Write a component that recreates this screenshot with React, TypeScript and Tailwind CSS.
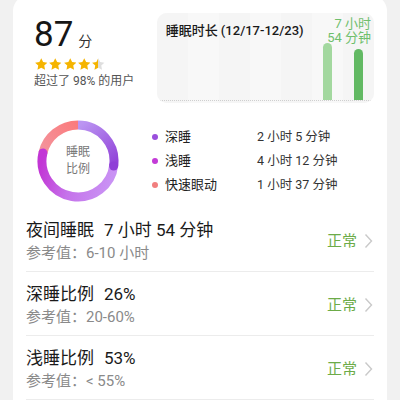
import React from "react";

const FONT = { fontFamily: 'Roboto, "Noto Sans CJK SC", sans-serif' };

interface Row {
  title: string;
  value: string;
  ref: string;
}

const rows: Row[] = [
  { title: "夜间睡眠", value: "7 小时 54 分钟", ref: "参考值：6-10 小时" },
  { title: "深睡比例", value: "26%", ref: "参考值：20-60%" },
  { title: "浅睡比例", value: "53%", ref: "参考值：< 55%" },
];

const legend = [
  { label: "深睡", value: "2 小时 5 分钟", dot: "bg-[#9a4fdc]" },
  { label: "浅睡", value: "4 小时 12 分钟", dot: "bg-[#c33bd7]" },
  { label: "快速眼动", value: "1 小时 37 分钟", dot: "bg-[#f17f7f]" },
];

// day columns of the weekly chart; only the last two have data
const bars: (number | null)[] = [null, null, null, null, null, 57, 51];

const Star = ({ fill = 1, id }: { fill?: number; id: string }) => (
  <svg width="12.5" height="12" viewBox="1.6 1.6 20.8 19.9">
    <defs>
      <linearGradient id={id} x1="0" x2="1" y1="0" y2="0">
        <stop offset={fill} stopColor="#f5b400" />
        <stop offset={fill} stopColor="#dedede" />
      </linearGradient>
    </defs>
    <path
      d="M12 1.8l3.1 6.6 7.1.9-5.2 4.9 1.3 7.1L12 17.8l-6.3 3.5 1.3-7.1L1.8 9.3l7.1-.9z"
      fill={`url(#${id})`}
    />
  </svg>
);

// angle in degrees, 0 = top, clockwise
const pt = (a: number, r = 36, c = 42) => {
  const rad = (a * Math.PI) / 180;
  return [c + r * Math.sin(rad), c - r * Math.cos(rad)];
};

const arc = (from: number, to: number) => {
  const [x1, y1] = pt(from);
  const [x2, y2] = pt(to);
  const large = to - from > 180 ? 1 : 0;
  return `M ${x1} ${y1} A 36 36 0 ${large} 1 ${x2} ${y2}`;
};

const Donut = () => {
  const [ex, ey] = pt(98);
  return (
    <svg width="84" height="84" viewBox="0 0 84 84">
      <defs>
        <linearGradient id="rem" gradientUnits="userSpaceOnUse" x1="8" y1="30" x2="42" y2="6">
          <stop offset="0" stopColor="#f4929a" />
          <stop offset="1" stopColor="#fb7b7c" />
        </linearGradient>
        <linearGradient id="deep" gradientUnits="userSpaceOnUse" x1="44" y1="6" x2="78" y2="48">
          <stop offset="0" stopColor="#bb95f2" />
          <stop offset="1" stopColor="#8f3fd7" />
        </linearGradient>
        <linearGradient id="light" gradientUnits="userSpaceOnUse" x1="78" y1="55" x2="8" y2="35">
          <stop offset="0" stopColor="#c992f4" />
          <stop offset="0.55" stopColor="#c572ea" />
          <stop offset="1" stopColor="#c236d5" />
        </linearGradient>
      </defs>
      <path d={arc(283, 360)} stroke="url(#rem)" strokeWidth="9" fill="none" />
      <path d={arc(96, 283)} stroke="url(#light)" strokeWidth="9" fill="none" strokeLinecap="round" />
      <path d={arc(0, 98)} stroke="url(#deep)" strokeWidth="9" fill="none" />
      <circle cx={ex} cy={ey} r="4.5" fill="#8f3fd7" />
    </svg>
  );
};

const Chevron = () => (
  <svg width="9" height="16" viewBox="0 0 9 16">
    <polyline points="1.5,1.5 7.5,8 1.5,14.5" fill="none" stroke="#c9c9c9" strokeWidth="1.4" />
  </svg>
);

export default function App() {
  return (
    <div className="w-[400px] h-[400px] overflow-hidden bg-[#f1f1f1]" style={FONT}>
      <div className="-mt-[5px] ml-[13px] w-[374px] bg-white rounded-2xl px-[13px] pb-[40px]">
        {/* score + weekly chart */}
        <div className="flex pt-[18px]">
          <div className="w-[131px] pl-[8px]">
            <div className="flex items-baseline mt-[2px] h-[40px]">
              <span className="text-[35px] leading-[40px] text-[#161616]">87</span>
              <span className="ml-[5px] text-[14px] text-[#333]">分</span>
            </div>
            <div className="flex gap-[1.8px] mt-[3px] h-[12px] items-center ml-[1px]">
              {[1, 1, 1, 1, 0.5].map((f, i) => (
                <Star key={i} fill={f} id={`s${i}`} />
              ))}
            </div>
            <div className="mt-[3px] text-[12px] leading-[16px] text-[#555]">超过了 98% 的用户</div>
          </div>

          <div className="relative w-[218px] h-[90px] rounded-[10px] overflow-hidden bg-[#f6f6f6] flex">
            {bars.map((h, i) => (
              <div
                key={i}
                className={`flex-1 flex items-end justify-center pb-[3px] ${
                  i % 2 === 0 ? "bg-[#f5f5f5]" : "bg-[#f8f8f8]"
                }`}
              >
                {h !== null && (
                  <div
                    className={`w-[9px] rounded-t-full ${i === 6 ? "bg-[#62b963]" : "bg-[#a3d89f]"}`}
                    style={{ height: h }}
                  />
                )}
              </div>
            ))}
            <div className="absolute left-[3px] right-[3px] bottom-[2px] border-b border-dotted border-[#cfcfcf]" />
            <div className="absolute left-[9px] top-[9px] text-[13px] leading-[18px] font-medium text-[#1a1a1a]">
              睡眠时长 (12/17-12/23)
            </div>
            <div className="absolute right-[3px] top-[4px] text-right text-[13px] leading-[14px] text-[#6fbf6d]">
              <div>7 小时</div>
              <div>54 分钟</div>
            </div>
          </div>
        </div>

        {/* sleep ratio */}
        <div className="flex items-center mt-[16px] mb-[5px]">
          <div className="relative ml-[10px] w-[84px] h-[84px]">
            <Donut />
            <div className="absolute inset-0 flex flex-col items-center justify-center text-[12px] leading-[17px] text-[#777]">
              <span>睡眠</span>
              <span>比例</span>
            </div>
          </div>
          <div className="ml-[32px] flex flex-col">
            {legend.map((l) => (
              <div key={l.label} className="flex items-center h-[24px]">
                <span className={`w-[6px] h-[6px] rounded-full ${l.dot}`} />
                <span className="ml-[7px] w-[92px] text-[13px] text-[#222]">{l.label}</span>
                <span className="text-[12.5px] text-[#333]">{l.value}</span>
              </div>
            ))}
          </div>
        </div>

        {/* detail rows */}
        {rows.map((r) => (
          <div key={r.title} className="flex items-center pt-[10px] pb-[7px] border-b border-[#ececec]">
            <div className="flex-1">
              <div className="text-[17px] leading-[24px] text-[#1a1a1a]">
                {r.title}
                <span className="ml-[10px]">{r.value}</span>
              </div>
              <div className="text-[15px] leading-[22px] text-[#8a8a8a]">{r.ref}</div>
            </div>
            <span className="text-[15px] text-[#6cab48]">正常</span>
            <span className="ml-[7px] mr-[1px] flex">
              <Chevron />
            </span>
          </div>
        ))}
      </div>
    </div>
  );
}
